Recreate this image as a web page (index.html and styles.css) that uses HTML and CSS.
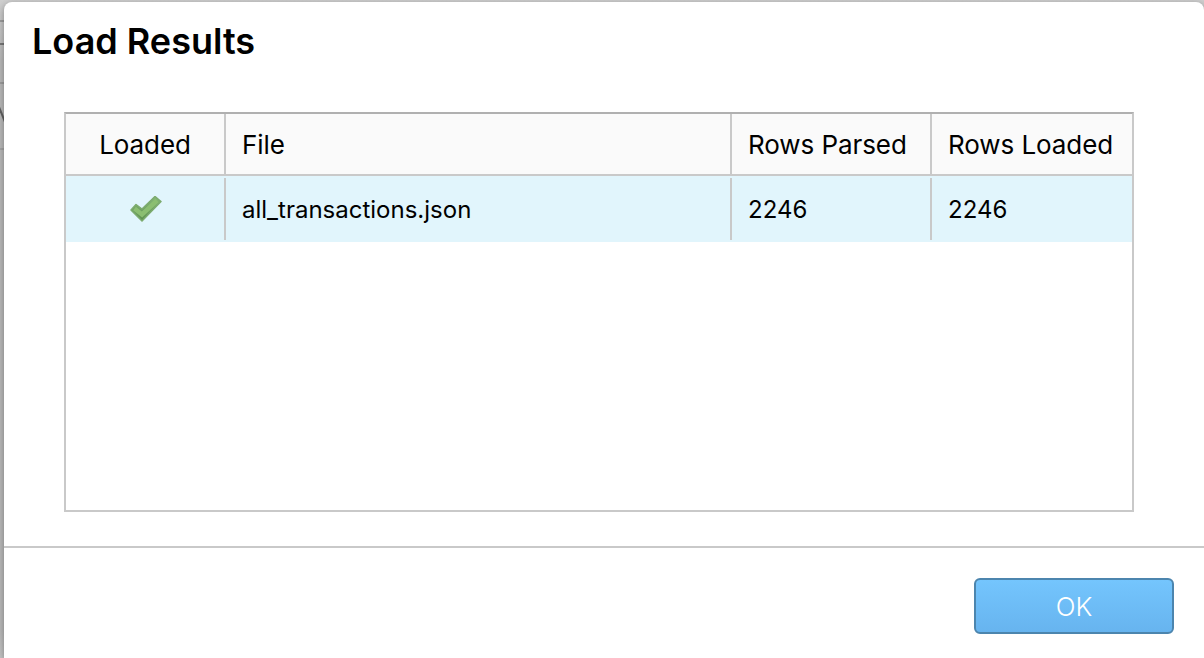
FILE: index.html
```html
<!DOCTYPE html>
<html lang="en">
<head>
<meta charset="utf-8">
<title>Load Results</title>
<link rel="stylesheet" href="styles.css">
</head>
<body>
<svg class="backdrop" width="4" height="658" viewBox="0 0 4 658" aria-hidden="true">
  <path d="M0 21H4M0 83H4" stroke="#9c9c9c" stroke-width="2"/>
  <path d="M0 44H4" stroke="#777" stroke-width="2"/>
  <path d="M0 149H4" stroke="#a4a4a4" stroke-width="2"/>
  <path d="M-1 107L5 122" stroke="#606060" stroke-width="2"/>
</svg>
<main class="dialog">
  <h1 class="title">Load Results</h1>
  <div class="grid">
    <div class="row head">
      <div class="cell center"><span>Loaded</span></div>
      <div class="cell"><span>File</span></div>
      <div class="cell"><span>Rows Parsed</span></div>
      <div class="cell"><span>Rows Loaded</span></div>
    </div>
    <div class="row data">
      <div class="cell center">
        <svg class="check" width="32" height="26" viewBox="0 0 32 26" role="img" aria-label="Loaded">
          <defs><linearGradient id="leaf" x1="0" y1="0" x2="0" y2="1"><stop offset="0" stop-color="#86b878"/><stop offset="1" stop-color="#5c8f4e"/></linearGradient></defs>
          <path d="M1 14L6 8.500L12 13L25 .5L31 5.500L12 25Z" fill="url(#leaf)" stroke="#7cab6e" stroke-width="1.500" stroke-linejoin="round"/>
          <path d="M4.500 12.500L12 18.500L27 4.500" fill="none" stroke="#8bbe71" stroke-width="4.500"/>
        </svg>
      </div>
      <div class="cell"><span>all_transactions.json</span></div>
      <div class="cell"><span>2246</span></div>
      <div class="cell"><span>2246</span></div>
    </div>
  </div>
  <footer class="footer"><button class="ok">OK</button></footer>
</main>
</body>
</html>
```
FILE: styles.css
```css
* { box-sizing: border-box; }
body {
  margin: 0;
  height: 658px;
  overflow: hidden;
  display: flex;
  background: linear-gradient(#cfcfcf, #b9b9b9 60px, #b9b9b9 630px, #c4c4c4);
  font-family: Inter, "Liberation Sans", sans-serif;
  color: #000;
}
.backdrop { flex: none; display: block; }
.dialog {
  flex: 1;
  margin-top: 2px;
  height: 656px;
  display: flex;
  flex-direction: column;
  background: #fff;
  border-radius: 8px 8px 0 0;
  box-shadow: 0 2px 7px rgba(0, 0, 0, .35);
}
.title {
  margin: 0;
  height: 110px;
  padding: 17px 28px 0;
  font-size: 36px;
  line-height: 44px;
  font-weight: 600;
}
.grid {
  width: 1070px;
  height: 400px;
  margin-left: 60px;
  border: 2px solid #c9c9c9;
  border-top-color: #b0b0b0;
}
.row {
  display: grid;
  grid-template-columns: 160px 506px 200px 200px;
}
.head {
  height: 62px;
  background: #fafafa;
  border-bottom: 2px solid #c9c9c9;
  font-size: 26px;
  letter-spacing: -.07px;
}
.data {
  height: 66px;
  padding: 2px 0;
  background: #e1f5fc;
  font-size: 24px;
}
.cell {
  display: flex;
  align-items: center;
  padding-left: 16px;
  border-right: 2px solid #c9c9c9;
  white-space: nowrap;
}
.cell:last-child { border-right: 0; }
.center { justify-content: center; padding-left: 0; }
.check { margin-left: 2px; }
.footer {
  margin-top: 34px;
  border-top: 2px solid #c9c9c9;
  padding: 30px 30px 0;
  display: flex;
  justify-content: flex-end;
}
.ok {
  width: 200px;
  height: 56px;
  padding: 0;
  border: 2px solid #4c85ae;
  border-radius: 6px;
  background: linear-gradient(#74c5fd, #67b4ef);
  color: #fff;
  font: 300 26px Inter, sans-serif;
}
```
